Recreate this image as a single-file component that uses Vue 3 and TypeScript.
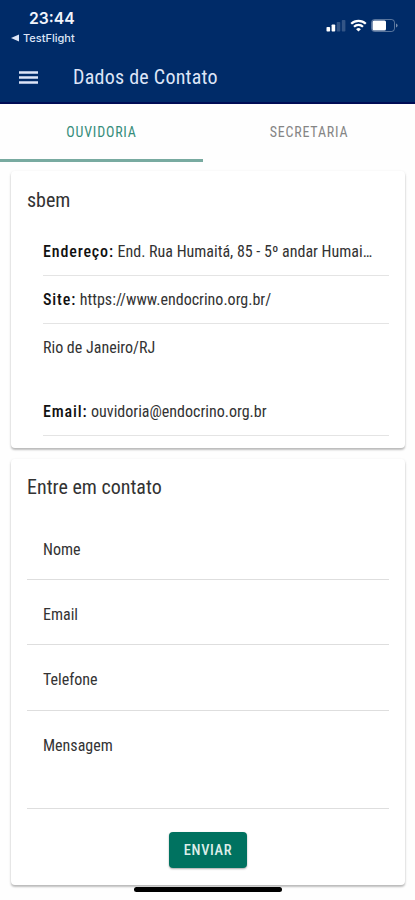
<script setup lang="ts">
import { ref } from 'vue'

interface ContactRow {
  label?: string
  value: string
  tall?: boolean
}

const tabs: string[] = ['OUVIDORIA', 'SECRETARIA']
const active = ref(0)

const rows: ContactRow[] = [
  { label: 'Endereço:', value: 'End. Rua Humaitá, 85 - 5º andar Humai…' },
  { label: 'Site:', value: 'https://www.endocrino.org.br/' },
  { value: 'Rio de Janeiro/RJ', tall: true },
  { label: 'Email:', value: 'ouvidoria@endocrino.org.br' },
]

const fields: string[] = ['Nome', 'Email', 'Telefone', 'Mensagem']
</script>

<template>
  <main class="screen">
    <header class="header">
      <div class="status">
        <div class="clock">
          <span class="time">23:44</span>
          <span class="back">
            <svg width="8" height="8" viewBox="0 0 8 8"><path d="M8 .5v7L0 4z" fill="currentColor" /></svg>
            <span>TestFlight</span>
          </span>
        </div>
        <div class="indicators">
          <svg width="20" height="13" viewBox="0 0 20 13">
            <rect x="0.5" y="8" width="3.6" height="4.5" rx=".8" fill="#fff" />
            <rect x="5.6" y="5.5" width="3.6" height="7" rx=".8" fill="#fff" />
            <rect x="10.7" y="3" width="3.6" height="9.5" rx=".8" fill="#fff" opacity=".2" />
            <rect x="15.8" y="1" width="3.6" height="11.5" rx=".8" fill="#fff" opacity=".2" />
          </svg>
          <svg width="17" height="13" viewBox="0 0 17 13" fill="none" stroke="#fff" stroke-width="2.2">
            <path d="M1.2 4.8a10.4 10.4 0 0 1 14.6 0" />
            <path d="M4 7.7a6.5 6.5 0 0 1 9 0" />
            <path d="M8.5 12.6 6.1 10.2a3.4 3.4 0 0 1 4.8 0z" fill="#fff" stroke="none" />
          </svg>
          <svg width="27" height="13" viewBox="0 0 27 13">
            <rect x=".5" y=".5" width="23" height="12" rx="3" fill="none" stroke="#fff" stroke-opacity=".35" />
            <rect x="1.5" y="1.5" width="13.5" height="10" rx="1.5" fill="#fff" />
            <path d="M25 4.5q1.6.6 1.6 2T25 8.5z" fill="#fff" opacity=".45" />
          </svg>
        </div>
      </div>
      <div class="toolbar">
        <svg class="menu" width="19" height="13" viewBox="0 0 19 13">
          <path d="M0 1.5h19M0 6.5h19M0 11.5h19" stroke="currentColor" stroke-width="2.4" />
        </svg>
        <h1>Dados de Contato</h1>
      </div>
    </header>

    <nav class="tabs">
      <button
        v-for="(tab, i) in tabs"
        :key="tab"
        class="tab"
        :class="{ active: active === i }"
        @click="active = i"
      >
        {{ tab }}
      </button>
    </nav>

    <section class="card info">
      <h2>sbem</h2>
      <ul>
        <li v-for="row in rows" :key="row.value" :class="{ tall: row.tall }">
          <p><b v-if="row.label">{{ row.label }}</b>{{ row.label ? ' ' : '' }}{{ row.value }}</p>
        </li>
      </ul>
    </section>

    <section class="card form">
      <h2>Entre em contato</h2>
      <div v-for="field in fields" :key="field" class="field" :class="{ area: field === 'Mensagem' }">
        <label>{{ field }}</label>
      </div>
      <button class="send">ENVIAR</button>
    </section>

    <div class="home"></div>
  </main>
</template>

<style>
body {
  background: #fff;
}
</style>

<style scoped>
.screen {
  position: relative;
  display: flex;
  flex-direction: column;
  box-sizing: border-box;
  height: 900px;
  overflow: hidden;
  background: #fefefe;
  color: #333;
  font-family: 'Roboto Condensed', Roboto, sans-serif;
  font-stretch: 75%;
}
.header {
  flex: none;
  box-sizing: border-box;
  height: 104px;
  background: #002b68;
  border-bottom: 2px solid #000c55;
  color: #dde5f7;
}
.status {
  display: flex;
  justify-content: space-between;
  height: 50px;
}
.clock {
  display: flex;
  flex-direction: column;
  padding: 9px 0 0 11px;
  font-family: Inter, sans-serif;
  font-stretch: 100%;
}
.time {
  padding-left: 18px;
  font-size: 15.7px;
  line-height: 20px;
  font-weight: 600;
  color: #f2f5fc;
}
.back {
  display: flex;
  align-items: center;
  gap: 4px;
  font-size: 11px;
  line-height: 18px;
  font-weight: 500;
}
.indicators {
  display: flex;
  gap: 4px;
  padding: 19px 17px 0 0;
}
.toolbar {
  display: flex;
  align-items: center;
  height: 54px;
  padding-left: 19px;
  gap: 35px;
}
h1 {
  margin: 0;
  font-size: 20px;
  line-height: 24px;
  font-weight: 400;
  letter-spacing: 0.25px;
}
.tabs {
  flex: none;
  display: flex;
  height: 58px;
}
.tab {
  box-sizing: border-box;
  width: 203px;
  padding: 0;
  border: 0;
  border-bottom: 3px solid transparent;
  background: none;
  color: #858585;
  font: inherit;
  font-stretch: 75%;
  font-size: 14px;
  letter-spacing: 0.8px;
}
.tab + .tab {
  width: 212px;
}
.tab.active {
  border-color: #78aaa0;
  color: #368d7b;
}
.card {
  flex: none;
  box-sizing: border-box;
  width: 394px;
  margin-left: 11px;
  padding: 0 16px;
  border-radius: 4px;
  background: #fff;
  box-shadow: 0 2px 2px rgba(0, 0, 0, 0.2), 0 1px 3px rgba(0, 0, 0, 0.12);
}
.info {
  height: 277px;
  margin-top: 9px;
}
.form {
  display: flex;
  flex-direction: column;
  height: 426px;
  margin-top: 11px;
}
h2 {
  margin: 0;
  height: 57px;
  font-size: 20px;
  line-height: 58px;
  font-weight: 400;
}
.form h2 {
  height: 56px;
  line-height: 57px;
}
ul {
  margin: 0;
  padding: 0 0 0 16px;
  list-style: none;
}
li {
  box-sizing: border-box;
  height: 48px;
  border-bottom: 1px solid #e4e4e4;
}
li.tall {
  height: 64px;
  border: 0;
}
p {
  margin: 0;
  overflow: hidden;
  font-size: 16px;
  line-height: 47px;
  text-overflow: ellipsis;
  white-space: nowrap;
}
b {
  color: #111;
  font-weight: 500;
  letter-spacing: 0.85px;
}
.field {
  box-sizing: border-box;
  height: 65px;
  padding-left: 16px;
  border-bottom: 1px solid #dedede;
  font-size: 16px;
}
.field label {
  display: block;
  padding-top: 25px;
  line-height: 20px;
}
.field:nth-of-type(3) {
  height: 66px;
}
.area {
  height: 98px;
}
.send {
  align-self: center;
  width: 78px;
  height: 36px;
  margin-top: 23px;
  padding: 0;
  border: 0;
  border-radius: 4px;
  background: #007260;
  box-shadow: 0 1px 2px rgba(0, 0, 0, 0.35);
  color: #dceee9;
  font: inherit;
  font-stretch: 75%;
  font-size: 14.5px;
  font-weight: 500;
  letter-spacing: 0.6px;
}
.home {
  position: absolute;
  bottom: 8px;
  left: 134px;
  width: 148px;
  height: 5px;
  border-radius: 3px;
  background: #000;
}
</style>
